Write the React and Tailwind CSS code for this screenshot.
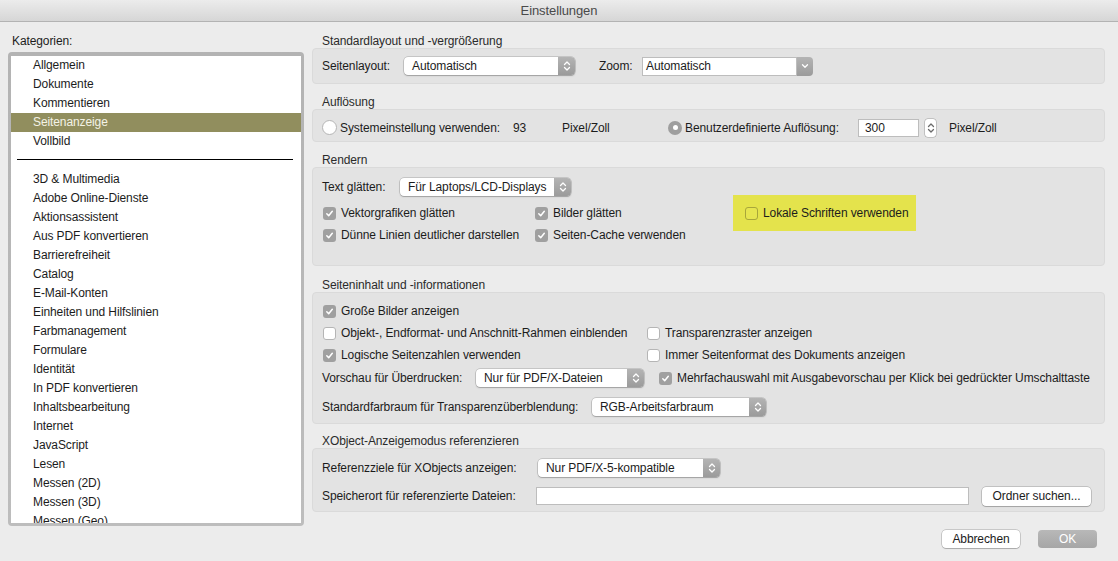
import React from "react";

const topItems = ["Allgemein", "Dokumente", "Kommentieren", "Seitenanzeige", "Vollbild"];
const moreItems = [
  "3D & Multimedia",
  "Adobe Online-Dienste",
  "Aktionsassistent",
  "Aus PDF konvertieren",
  "Barrierefreiheit",
  "Catalog",
  "E-Mail-Konten",
  "Einheiten und Hilfslinien",
  "Farbmanagement",
  "Formulare",
  "Identität",
  "In PDF konvertieren",
  "Inhaltsbearbeitung",
  "Internet",
  "JavaScript",
  "Lesen",
  "Messen (2D)",
  "Messen (3D)",
  "Messen (Geo)",
];

function Updown({ color = "white" }) {
  return (
    <svg width="8" height="12" viewBox="0 0 8 12">
      <path d="M1.5 4.5 L4 2 L6.5 4.5" stroke={color} strokeWidth="1.3" fill="none" strokeLinecap="round" strokeLinejoin="round" />
      <path d="M1.5 7.5 L4 10 L6.5 7.5" stroke={color} strokeWidth="1.3" fill="none" strokeLinecap="round" strokeLinejoin="round" />
    </svg>
  );
}

function Select({ text, className }) {
  return (
    <div className={`flex h-[18px] items-center rounded-[4px] bg-white shadow-[0_0_0_0.5px_rgba(0,0,0,0.25),0_1px_1.5px_rgba(0,0,0,0.2)] ${className}`}>
      <span className="flex-1 truncate pl-[8px]">{text}</span>
      <span className="flex h-full w-[17px] items-center justify-center rounded-r-[4px] bg-gradient-to-b from-[#b4b4b4] to-[#9b9b9b]">
        <Updown />
      </span>
    </div>
  );
}

function Check({ checked, tint }) {
  if (checked) {
    return (
      <span className="flex h-[13px] w-[13px] shrink-0 items-center justify-center rounded-[3px] bg-[#a0a0a0]">
        <svg width="9" height="9" viewBox="0 0 9 9">
          <path d="M1.8 4.8 L3.7 6.7 L7.3 2.3" stroke="white" strokeWidth="1.5" fill="none" strokeLinecap="round" strokeLinejoin="round" />
        </svg>
      </span>
    );
  }
  return (
    <span
      className={`h-[13px] w-[13px] shrink-0 rounded-[3px] border ${
        tint ? "border-[#a8a63a] bg-[#e6e550]" : "border-[#b5b5b5] bg-white"
      }`}
    />
  );
}

function Option({ checked, label, className = "" }) {
  return (
    <div className={`flex items-center ${className}`}>
      <Check checked={checked} />
      <span className="ml-[5px] whitespace-nowrap">{label}</span>
    </div>
  );
}

function Section({ title, className = "", boxClass = "", children }) {
  return (
    <div className={className}>
      <div className="h-[14px] pl-[10px] leading-[14px] text-[#2b2b2b]">{title}</div>
      <div className={`rounded-[4px] border border-[#dadada] bg-[#e3e3e3] pl-[9px] ${boxClass}`}>{children}</div>
    </div>
  );
}

export default function App() {
  return (
    <div className="flex h-[561px] w-[1118px] flex-col overflow-hidden bg-[#ececec] text-[12px] tracking-[-0.1px] text-[#1c1c1c] [font-family:'Liberation_Sans',Arial,sans-serif]">
      {/* Title bar */}
      <div className="flex h-[22px] shrink-0 items-center justify-center border-b border-[#b3b3b3] bg-gradient-to-b from-[#ececec] to-[#d6d6d6] text-[13px] text-[#4a4a4a]">
        Einstellungen
      </div>

      <div className="flex flex-1">
        {/* Categories */}
        <div className="ml-[8px] w-[296px]">
          <div className="mt-[12px] h-[14px] pl-[4px] leading-[14px]">Kategorien:</div>
          <div className="mt-[4px] h-[474px] rounded-[4px] bg-gradient-to-b from-[#b3b3b3] to-[#bdbdbd] p-[3px] pt-[4px]">
            <div className="h-full overflow-hidden bg-white">
              {topItems.map((t) => (
                <div
                  key={t}
                  className={`h-[19px] pl-[22px] leading-[19px] ${
                    t === "Seitenanzeige" ? "bg-[#918e5e] text-[#f4f3e6]" : ""
                  }`}
                >
                  {t}
                </div>
              ))}
              <div className="h-[19px] pl-[6px] pr-[8px] pt-[8px]">
                <div className="h-px w-full bg-black" />
              </div>
              {moreItems.map((t) => (
                <div key={t} className="h-[19px] pl-[22px] leading-[19px]">
                  {t}
                </div>
              ))}
            </div>
          </div>
        </div>

        {/* Settings */}
        <div className="ml-[8px] w-[793px]">
          <Section title="Standardlayout und -vergrößerung" className="mt-[12px]" boxClass="h-[36px] flex items-center">
            <span className="w-[82px]">Seitenlayout:</span>
            <Select text="Automatisch" className="w-[171px]" />
            <span className="ml-[24px] w-[43px]">Zoom:</span>
            <div className="flex h-[19px] w-[171px] items-center">
              <div className="flex h-full flex-1 items-center border border-[#bdbdbd] bg-white pl-[3px]">Automatisch</div>
              <span className="flex h-full w-[16px] items-center justify-center rounded-r-[4px] bg-gradient-to-b from-[#b4b4b4] to-[#9b9b9b]">
                <svg width="8" height="8" viewBox="0 0 8 8">
                  <path d="M1.5 2.8 L4 5.3 L6.5 2.8" stroke="white" strokeWidth="1.3" fill="none" strokeLinecap="round" strokeLinejoin="round" />
                </svg>
              </span>
            </div>
          </Section>

          <Section title="Auflösung" className="mt-[11px]" boxClass="h-[33px] flex items-center pt-[4px]">
            <span className="h-[15px] w-[15px] shrink-0 rounded-full border border-[#b5b5b5] bg-white" />
            <span className="ml-[3px] w-[173px]">Systemeinstellung verwenden:</span>
            <span className="w-[49px]">93</span>
            <span className="w-[106px]">Pixel/Zoll</span>
            <span className="flex h-[14px] w-[14px] shrink-0 items-center justify-center rounded-full bg-[#9e9e9e]">
              <span className="h-[5px] w-[5px] rounded-full bg-white" />
            </span>
            <span className="ml-[3px] w-[173px]">Benutzerdefinierte Auflösung:</span>
            <div className="flex h-[18px] w-[61px] items-center border border-[#bdbdbd] bg-white pl-[6px]">300</div>
            <span className="ml-[6px] flex h-[18px] w-[11px] items-center justify-center rounded-[3px] bg-white shadow-[0_0_0_0.5px_rgba(0,0,0,0.3)]">
              <Updown color="#6b6b6b" />
            </span>
            <span className="ml-[13px]">Pixel/Zoll</span>
          </Section>

          <Section title="Rendern" className="mt-[11px]" boxClass="h-[99px] pt-[9px]">
            <div className="flex h-[20px] items-center">
              <span className="w-[78px]">Text glätten:</span>
              <Select text="Für Laptops/LCD-Displays" className="w-[171px]" />
            </div>
            <div className="mt-[6px] flex h-[20px] items-center">
              <Option checked label="Vektorgrafiken glätten" className="ml-[1px] w-[212px]" />
              <Option checked label="Bilder glätten" className="w-[210px]" />
              <div className="relative flex items-center">
                <span className="absolute -left-[12px] -top-[9px] h-[36px] w-[183px] bg-[#e4e34c]" />
                <span className="relative flex items-center">
                  <Check tint />
                  <span className="ml-[5px] whitespace-nowrap">Lokale Schriften verwenden</span>
                </span>
              </div>
            </div>
            <div className="mt-[2px] flex h-[20px] items-center">
              <Option checked label="Dünne Linien deutlicher darstellen" className="ml-[1px] w-[212px]" />
              <Option checked label="Seiten-Cache verwenden" />
            </div>
          </Section>

          <Section title="Seiteninhalt und -informationen" className="mt-[12px]" boxClass="h-[132px] pt-[8px]">
            <div className="flex h-[20px] items-center">
              <Option checked label="Große Bilder anzeigen" className="ml-[1px]" />
            </div>
            <div className="mt-[2px] flex h-[20px] items-center">
              <Option label="Objekt-, Endformat- und Anschnitt-Rahmen einblenden" className="ml-[1px] w-[324px]" />
              <Option label="Transparenzraster anzeigen" />
            </div>
            <div className="mt-[2px] flex h-[20px] items-center">
              <Option checked label="Logische Seitenzahlen verwenden" className="ml-[1px] w-[324px]" />
              <Option label="Immer Seitenformat des Dokuments anzeigen" />
            </div>
            <div className="mt-[3px] flex h-[20px] items-center">
              <span className="w-[154px]">Vorschau für Überdrucken:</span>
              <Select text="Nur für PDF/X-Dateien" className="w-[168px]" />
              <Option checked label="Mehrfachauswahl mit Ausgabevorschau per Klick bei gedrückter Umschalttaste" className="ml-[15px]" />
            </div>
            <div className="mt-[9px] flex h-[20px] items-center">
              <span className="w-[270px]">Standardfarbraum für Transparenzüberblendung:</span>
              <Select text="RGB-Arbeitsfarbraum" className="w-[174px]" />
            </div>
          </Section>

          <Section title="XObject-Anzeigemodus referenzieren" className="mt-[10px]" boxClass="h-[64px] pt-[9px]">
            <div className="flex h-[20px] items-center">
              <span className="w-[216px]">Referenzziele für XObjects anzeigen:</span>
              <Select text="Nur PDF/X-5-kompatible" className="w-[182px]" />
            </div>
            <div className="mt-[8px] flex h-[20px] items-center">
              <span className="w-[214px]">Speicherort für referenzierte Dateien:</span>
              <div className="h-[18px] w-[433px] border border-[#bdbdbd] bg-white" />
              <button className="ml-[13px] h-[19px] w-[109px] rounded-[4px] bg-white shadow-[0_0_0_0.5px_rgba(0,0,0,0.3),0_1px_1px_rgba(0,0,0,0.15)]">
                Ordner suchen...
              </button>
            </div>
          </Section>

          <div className="mt-[18px] flex justify-end pr-[8px]">
            <button className="h-[18px] w-[78px] rounded-[4px] bg-white shadow-[0_0_0_0.5px_rgba(0,0,0,0.3),0_1px_1px_rgba(0,0,0,0.15)]">
              Abbrechen
            </button>
            <button className="ml-[18px] h-[18px] w-[59px] rounded-[4px] bg-gradient-to-b from-[#b8b8b8] to-[#a6a6a6] text-white">
              OK
            </button>
          </div>
        </div>
      </div>
    </div>
  );
}
